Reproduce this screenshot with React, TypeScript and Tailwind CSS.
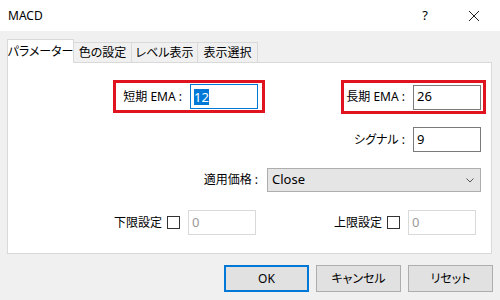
const font = { fontFamily: '"Noto Sans", "Noto Sans CJK JP", sans-serif' };

const Field = ({ value, focused, disabled }: { value: string; focused?: boolean; disabled?: boolean }) => (
  <div
    className={
      "w-[68px] h-[25px] bg-white flex items-center pl-[3px] text-[13px] border " +
      (focused ? "border-[#0078d7]" : disabled ? "border-[#d9d9d9] text-[#9a9a9a]" : "border-[#7a7a7a] text-black")
    }
  >
    {focused ? <span className="bg-[#0078d7] text-white leading-[16px]">{value}</span> : value}
  </div>
);

const Check = () => <div className="w-[13px] h-[13px] border border-[#333] bg-white" />;

const Tab = ({ label, width, active }: { label: string; width: string; active?: boolean }) => (
  <div
    className={
      "flex items-center justify-center whitespace-nowrap border border-[#d9d9d9] border-b-0 text-[12px] " +
      width +
      (active ? " h-[24px] bg-white relative z-10 -mb-px" : " h-[20px] border-l-0 bg-[#f0f0f0]")
    }
  >
    {label}
  </div>
);

export default function App() {
  return (
    <div
      className="w-[500px] h-[300px] bg-[#f0f0f0] text-black overflow-hidden whitespace-nowrap [font-feature-settings:'palt']"
      style={font}
    >
      {/* Title bar */}
      <div className="h-[31px] bg-white flex items-center pl-[8px]">
        <span className="text-[12px]">MACD</span>
        <span className="ml-auto text-[13px] mr-[40px]">?</span>
        <svg width="12" height="12" viewBox="0 0 12 12" className="mr-[20px]">
          <path d="M1 1 L11 11 M11 1 L1 11" stroke="#222" strokeWidth="1" />
        </svg>
      </div>

      {/* Tabs */}
      <div className="flex items-end pl-[7px] pt-[8px]">
        <Tab label="パラメーター" width="w-[67px]" active />
        <Tab label="色の設定" width="w-[58px]" />
        <Tab label="レベル表示" width="w-[66px]" />
        <Tab label="表示選択" width="w-[60px]" />
      </div>

      {/* Panel */}
      <div className="mx-[7px] w-[485px] h-[192px] bg-white border border-[#d9d9d9] flex flex-col text-[12px]">
        <div className="flex mt-[17px] h-[34px]">
          <div className="ml-[105px] w-[152px] h-[33px] border-[3px] border-[#e0141e] flex items-center justify-end pr-[4px]">
            <span className="mr-[8px]">短期 EMA :</span>
            <Field value="12" focused />
          </div>
          <div className="ml-[76px] w-[145px] h-[34px] border-[3px] border-[#e0141e] flex items-center justify-end pr-[2px]">
            <span className="mr-[8px]">長期 EMA :</span>
            <Field value="26" />
          </div>
        </div>

        <div className="flex justify-end items-center pr-[10px] mt-[13px] h-[25px]">
          <span className="mr-[8px]">シグナル :</span>
          <Field value="9" />
        </div>

        <div className="flex justify-end items-center pr-[10px] mt-[16px] h-[24px]">
          <span className="mr-[9px]">適用価格 :</span>
          <div className="w-[214px] h-[24px] bg-[#e5e5e5] border border-[#adadad] flex items-center pl-[4px] pr-[6px] text-[13px]">
            <span>Close</span>
            <svg width="8" height="5" viewBox="0 0 8 5" className="ml-auto">
              <path d="M0.5 0.5 L4 4 L7.5 0.5" fill="none" stroke="#555" strokeWidth="1" />
            </svg>
          </div>
        </div>

        <div className="flex items-center mt-[18px] h-[25px] ml-[106px]">
          <span>下限設定</span>
          <div className="ml-[5px] mr-[8px]">
            <Check />
          </div>
          <Field value="0" disabled />
          <span className="ml-[78px]">上限設定</span>
          <div className="ml-[5px] mr-[8px]">
            <Check />
          </div>
          <Field value="0" disabled />
        </div>
      </div>

      {/* Buttons */}
      <div className="flex justify-end gap-[7px] pr-[7px] mt-[11px] text-[12px]">
        <button className="w-[85px] h-[27px] bg-[#e1e1e1] border-2 border-[#0078d7]">OK</button>
        <button className="w-[85px] h-[27px] bg-[#e1e1e1] border border-[#adadad]">キャンセル</button>
        <button className="w-[85px] h-[27px] bg-[#e1e1e1] border border-[#adadad]">リセット</button>
      </div>
    </div>
  );
}
